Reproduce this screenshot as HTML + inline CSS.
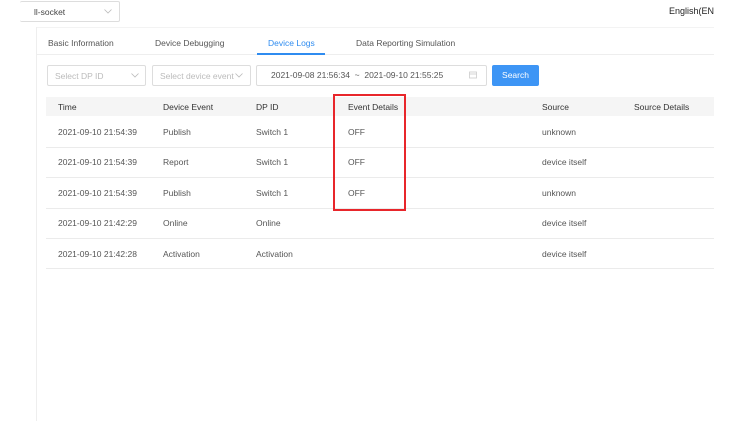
<!DOCTYPE html><html><head><style>
body{margin:0;width:748px;height:421px;background:#fff;font-family:"Liberation Sans",sans-serif;font-size:8.5px;color:#555;position:relative;overflow:hidden}
.a{position:absolute;white-space:nowrap}
.box{position:absolute;border:1px solid #ddd;border-radius:2px;box-sizing:border-box}
.ph{color:#bbb}
.hl{position:absolute;left:46px;width:668px;height:1px;background:#ebebeb}
svg{position:absolute}
</style></head><body>
<div class="box" style="left:20px;top:1px;width:100px;height:21px;border-left:none"></div>
<div class="a" style="left:34px;top:7px;color:#444">ll-socket</div>
<svg style="left:104px;top:9px" width="8" height="5"><path d="M0.5 0.5L4 4L7.5 0.5" fill="none" stroke="#bbb" stroke-width="0.8"/></svg>
<div class="a" style="left:669px;top:6px;color:#222;font-size:9px">English(EN</div>
<div style="position:absolute;left:36px;top:27px;width:1px;height:394px;background:#eee"></div>
<div style="position:absolute;left:37px;top:27px;width:677px;height:1px;background:#f3f3f3"></div>
<div class="a" style="left:48px;top:38px">Basic Information</div>
<div class="a" style="left:155px;top:38px">Device Debugging</div>
<div class="a" style="left:268px;top:38px;color:#2f8cf0">Device Logs</div>
<div class="a" style="left:356px;top:38px">Data Reporting Simulation</div>
<div style="position:absolute;left:37px;top:54px;width:677px;height:1px;background:#eee"></div>
<div style="position:absolute;left:257px;top:53px;width:68px;height:2px;background:#2f8cf0"></div>
<div class="box" style="left:47px;top:65px;width:99px;height:21px"></div>
<div class="a ph" style="left:55px;top:71px">Select DP ID</div>
<svg style="left:131px;top:73px" width="8" height="5"><path d="M0.5 0.5L4 4L7.5 0.5" fill="none" stroke="#bbb" stroke-width="0.8"/></svg>
<div class="box" style="left:152px;top:65px;width:99px;height:21px"></div>
<div class="a ph" style="left:160px;top:71px">Select device event</div>
<svg style="left:235px;top:73px" width="8" height="5"><path d="M0.5 0.5L4 4L7.5 0.5" fill="none" stroke="#bbb" stroke-width="0.8"/></svg>
<div class="box" style="left:256px;top:65px;width:231px;height:21px"></div>
<div class="a" style="left:271px;top:70px">2021-09-08 21:56:34 &nbsp;~ &nbsp;2021-09-10 21:55:25</div>
<svg style="left:469px;top:71px" width="8" height="8"><rect x="0.5" y="1" width="7" height="6" fill="none" stroke="#ccc" stroke-width="0.8"/><line x1="0.5" y1="3" x2="7.5" y2="3" stroke="#ccc" stroke-width="0.8"/></svg>
<div style="position:absolute;left:492px;top:65px;width:47px;height:21px;background:#3d95f5;border-radius:2px;color:#fff;text-align:center;line-height:21px">Search</div>
<div style="position:absolute;left:46px;top:97px;width:668px;height:19px;background:#f5f5f5"></div>
<div class="a" style="left:58px;top:102px;color:#333">Time</div>
<div class="a" style="left:163px;top:102px;color:#333">Device Event</div>
<div class="a" style="left:256px;top:102px;color:#333">DP ID</div>
<div class="a" style="left:348px;top:102px;color:#333">Event Details</div>
<div class="a" style="left:542px;top:102px;color:#333">Source</div>
<div class="a" style="left:634px;top:102px;color:#333">Source Details</div>
<div class="hl" style="top:147px"></div><div class="hl" style="top:177px"></div><div class="hl" style="top:208px"></div><div class="hl" style="top:238px"></div><div class="hl" style="top:268px"></div>
<div class="a" style="left:58px;top:127px">2021-09-10 21:54:39</div><div class="a" style="left:163px;top:127px">Publish</div><div class="a" style="left:256px;top:127px">Switch 1</div><div class="a" style="left:348px;top:127px">OFF</div><div class="a" style="left:542px;top:127px">unknown</div>
<div class="a" style="left:58px;top:157px">2021-09-10 21:54:39</div><div class="a" style="left:163px;top:157px">Report</div><div class="a" style="left:256px;top:157px">Switch 1</div><div class="a" style="left:348px;top:157px">OFF</div><div class="a" style="left:542px;top:157px">device itself</div>
<div class="a" style="left:58px;top:188px">2021-09-10 21:54:39</div><div class="a" style="left:163px;top:188px">Publish</div><div class="a" style="left:256px;top:188px">Switch 1</div><div class="a" style="left:348px;top:188px">OFF</div><div class="a" style="left:542px;top:188px">unknown</div>
<div class="a" style="left:58px;top:218px">2021-09-10 21:42:29</div><div class="a" style="left:163px;top:218px">Online</div><div class="a" style="left:256px;top:218px">Online</div><div class="a" style="left:542px;top:218px">device itself</div>
<div class="a" style="left:58px;top:249px">2021-09-10 21:42:28</div><div class="a" style="left:163px;top:249px">Activation</div><div class="a" style="left:256px;top:249px">Activation</div><div class="a" style="left:542px;top:249px">device itself</div>
<div style="position:absolute;left:333px;top:94px;width:73px;height:117px;border:2px solid #e8262b;box-sizing:border-box"></div>
</body></html>
